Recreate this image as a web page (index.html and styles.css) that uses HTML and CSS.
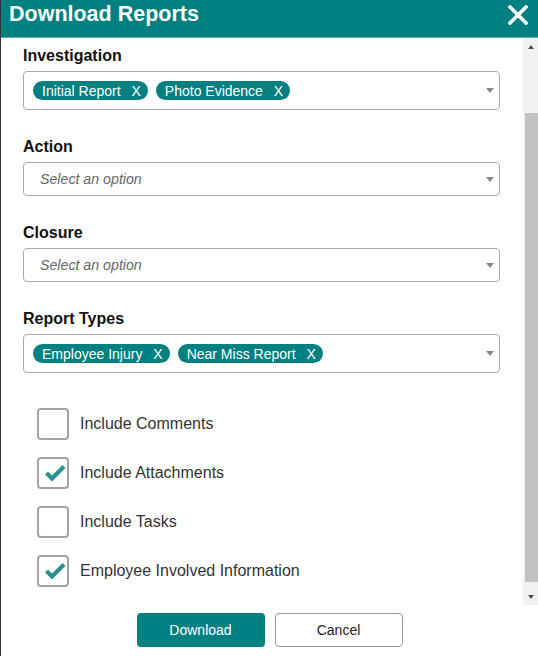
FILE: index.html
```html
<!DOCTYPE html>
<html lang="en">
<head>
    <meta charset="UTF-8">
    <meta name="viewport" content="width=device-width, initial-scale=1.0">
    <title>Download Reports</title>
    <link rel="stylesheet" href="styles.css">
</head>
<body>
    <div class="dialog">
        <header class="dialog-header">
            <h1>Download Reports</h1>
            <button class="close-btn" aria-label="Close">
                <svg width="20" height="20" viewBox="0 0 20 20">
                    <path d="M2 2 L18 18 M18 2 L2 18" stroke="#fff" stroke-width="3.6" stroke-linecap="square" fill="none"/>
                </svg>
            </button>
        </header>

        <div class="dialog-main">
            <div class="dialog-body">
                <div class="field">
                    <label class="field-label">Investigation</label>
                    <div class="select multi">
                        <div class="chips">
                            <span class="chip">Initial Report <span class="chip-x">X</span></span>
                            <span class="chip">Photo Evidence <span class="chip-x">X</span></span>
                        </div>
                        <span class="caret"></span>
                    </div>
                </div>

                <div class="field">
                    <label class="field-label">Action</label>
                    <div class="select">
                        <span class="placeholder">Select an option</span>
                        <span class="caret"></span>
                    </div>
                </div>

                <div class="field">
                    <label class="field-label">Closure</label>
                    <div class="select">
                        <span class="placeholder">Select an option</span>
                        <span class="caret"></span>
                    </div>
                </div>

                <div class="field">
                    <label class="field-label">Report Types</label>
                    <div class="select multi">
                        <div class="chips">
                            <span class="chip">Employee Injury <span class="chip-x">X</span></span>
                            <span class="chip">Near Miss Report <span class="chip-x">X</span></span>
                        </div>
                        <span class="caret"></span>
                    </div>
                </div>

                <div class="options">
                    <label class="option"><span class="box"></span>Include Comments</label>
                    <label class="option"><span class="box checked"><svg width="32" height="32" viewBox="0 0 32 32"><path d="M9.5 16 L15 21.5 L27 9.5" stroke="#2a9090" stroke-width="4.2" fill="none"/></svg></span>Include Attachments</label>
                    <label class="option"><span class="box"></span>Include Tasks</label>
                    <label class="option"><span class="box checked"><svg width="32" height="32" viewBox="0 0 32 32"><path d="M9.5 16 L15 21.5 L27 9.5" stroke="#2a9090" stroke-width="4.2" fill="none"/></svg></span>Employee Involved Information</label>
                </div>
            </div>

            <!-- scrollbar for the form column -->
            <div class="scrollbar">
                <div class="sb-btn"><span class="arrow-up"></span></div>
                <div class="sb-track"><div class="sb-thumb"></div></div>
                <div class="sb-btn"><span class="arrow-down"></span></div>
            </div>
        </div>

        <footer class="dialog-footer">
            <button class="btn btn-primary">Download</button>
            <button class="btn btn-secondary">Cancel</button>
        </footer>
    </div>
</body>
</html>
```

FILE: styles.css
```css
body {
    margin: 0;
    font-family: "Liberation Sans", Arial, sans-serif;
    background: #fff;
}
.dialog {
    height: 656px;
    display: flex;
    flex-direction: column;
    border-left: 1px solid #333;
    box-sizing: border-box;
    overflow: hidden;
}
.dialog-header {
    height: 38px;
    flex-shrink: 0;
    box-sizing: border-box;
    background: #008080;
    border-bottom: 1px solid #5fadad;
    display: flex;
    justify-content: space-between;
    align-items: flex-start;
    padding: 0 10px 0 8px;
}
.dialog-header h1 {
    margin: 0;
    font-size: 21.5px;
    line-height: 29px;
    font-weight: bold;
    color: #fff;
}
.close-btn {
    background: none;
    border: none;
    padding: 0;
    margin-top: 5px;
    width: 20px;
    height: 20px;
    cursor: pointer;
}
.close-btn svg {
    display: block;
}
.dialog-main {
    flex: 1;
    min-height: 0;
    display: flex;
}
.dialog-body {
    flex: 1;
    overflow: hidden;
    padding: 9px 23px 18px 22px;
}

/* scrollbar */
.scrollbar {
    width: 15px;
    flex-shrink: 0;
    background: #f1f1f1;
    display: flex;
    flex-direction: column;
}
.sb-btn {
    height: 17px;
    display: flex;
    align-items: center;
    justify-content: center;
}
.arrow-up,
.arrow-down {
    width: 0;
    height: 0;
    border-left: 3.5px solid transparent;
    border-right: 3.5px solid transparent;
}
.arrow-up {
    border-bottom: 4px solid #505050;
}
.arrow-down {
    border-top: 4px solid #505050;
}
.sb-track {
    flex: 1;
    padding: 58px 0 0 2px;
}
.sb-thumb {
    height: 469px;
    background: #c1c1c1;
}

.field {
    margin-bottom: 28px;
}
.field-label {
    display: block;
    font-size: 16px;
    line-height: 18px;
    font-weight: bold;
    color: #111;
    margin-bottom: 6px;
}
.select {
    display: flex;
    align-items: center;
    min-height: 34px;
    box-sizing: border-box;
    border: 1px solid #aaa;
    border-radius: 4px;
    padding: 0 5px 0 16px;
}
.select.multi {
    padding: 9px 5px 9px 9px;
}
.placeholder {
    flex: 1;
    font-size: 14.2px;
    font-style: italic;
    color: #666;
}
.chips {
    flex: 1;
    display: flex;
    flex-wrap: wrap;
    gap: 8px;
}
.chip {
    display: inline-flex;
    align-items: center;
    height: 19px;
    padding: 0 7px 0 9px;
    border-radius: 10px;
    background: #008080;
    color: #fff;
    font-size: 14px;
    white-space: pre;
}
.chip-x {
    margin-left: 7px;
}
.caret {
    width: 0;
    height: 0;
    border-left: 4px solid transparent;
    border-right: 4px solid transparent;
    border-top: 5px solid #888;
}
.options {
    padding: 7px 0 0 14px;
    display: flex;
    flex-direction: column;
    gap: 17px;
}
.option {
    display: flex;
    align-items: center;
    gap: 11px;
    font-size: 16px;
    color: #333;
}
.box {
    width: 32px;
    height: 32px;
    box-sizing: border-box;
    border: 2px solid #a3a3a3;
    border-radius: 4px;
    position: relative;
}
.box svg {
    position: absolute;
    left: -2px;
    top: -2px;
}
.dialog-footer {
    height: 51px;
    flex-shrink: 0;
    box-sizing: border-box;
    padding-top: 8px;
    display: flex;
    justify-content: center;
    align-items: flex-start;
    gap: 10px;
}
.btn {
    width: 128px;
    height: 34px;
    border-radius: 4px;
    font-family: "Liberation Sans", Arial, sans-serif;
    font-size: 14px;
    cursor: pointer;
}
.btn-primary {
    background: #008080;
    border: none;
    color: #fff;
}
.btn-secondary {
    background: #fff;
    border: 1px solid #999;
    color: #222;
}
```
